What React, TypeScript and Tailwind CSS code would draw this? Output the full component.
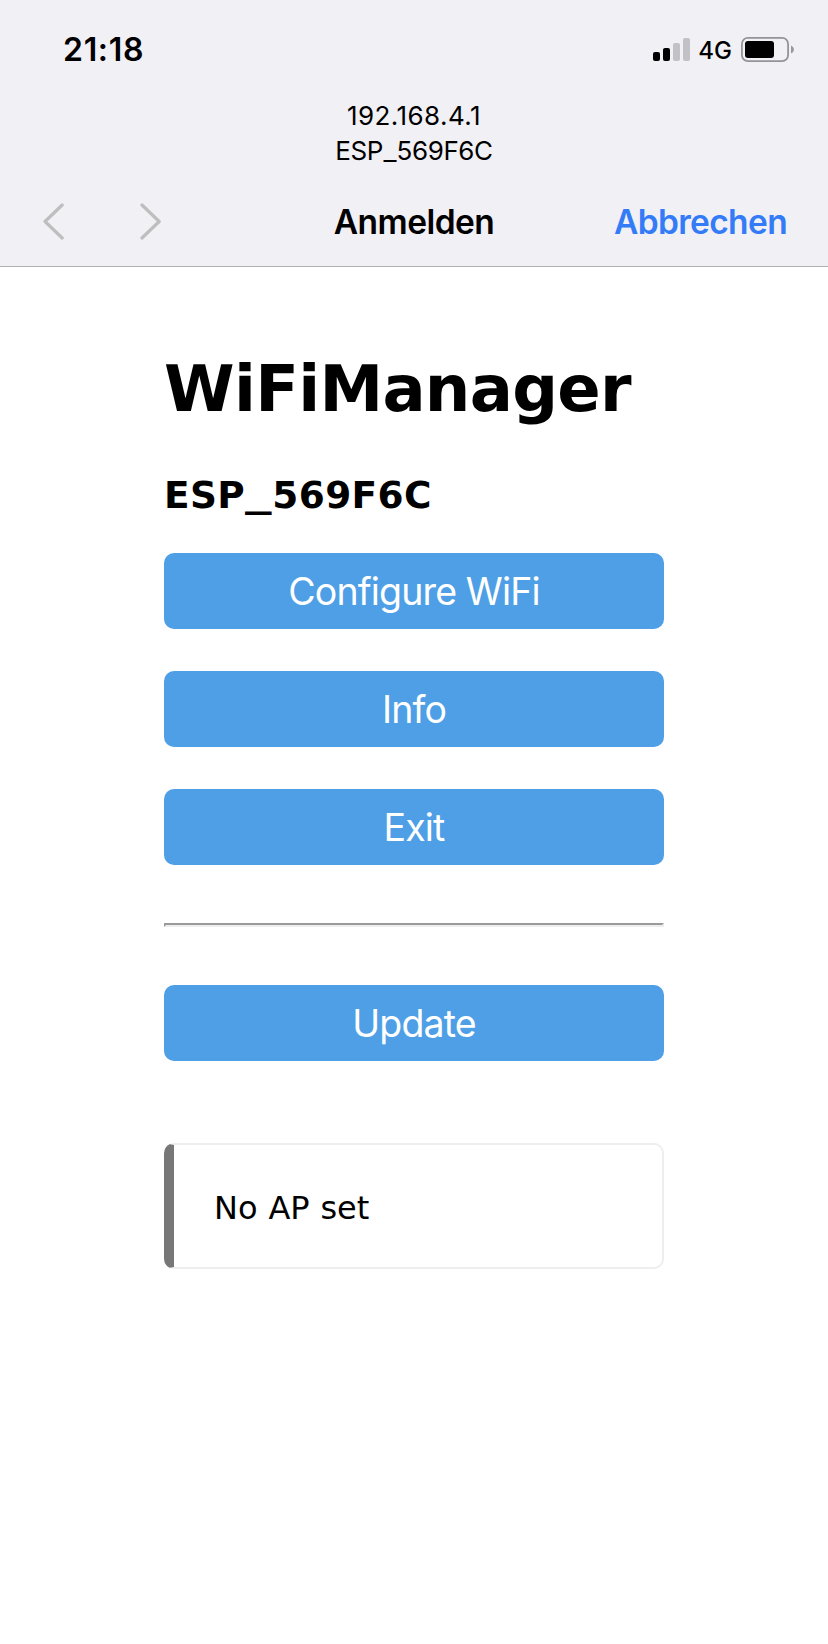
const ACTIONS = ["Configure WiFi", "Info", "Exit"];

function Signal() {
  return (
    <svg width="37" height="24" viewBox="0 0 37 24" aria-hidden="true">
      <rect x="0" y="14" width="7" height="9" rx="2" fill="#000" />
      <rect x="10" y="10" width="7" height="13" rx="2" fill="#000" />
      <rect x="20" y="5" width="7" height="18" rx="2" fill="#c1c1c6" />
      <rect x="30" y="0" width="7" height="23" rx="2" fill="#c1c1c6" />
    </svg>
  );
}

function Battery() {
  return (
    <svg width="53" height="25" viewBox="0 0 53 25" aria-hidden="true">
      <rect x="0.9" y="0.9" width="46.2" height="23.2" rx="6" fill="none" stroke="#949498" strokeWidth="1.8" />
      <rect x="4" y="4" width="29" height="17" rx="3" fill="#000" />
      <path d="M50 8.5 Q53 9.8 53 12.5 Q53 15.2 50 16.5 Z" fill="#98989c" />
    </svg>
  );
}

function Chevron({ d }: { d: string }) {
  return (
    <svg width="21" height="37" viewBox="0 0 21 37" fill="none" stroke="#bebebf" strokeWidth="3.2" strokeLinecap="round" strokeLinejoin="round" aria-hidden="true">
      <path d={d} />
    </svg>
  );
}

function ActionButton({ label }: { label: string }) {
  return (
    <button className="block h-[76px] w-full rounded-[10px] bg-[#4e9fe6] text-center font-['Inter',sans-serif] text-[37.5px] leading-[78px] tracking-[-0.85px] text-white">
      {label}
    </button>
  );
}

export default function App() {
  return (
    <div className="flex min-h-[1644px] w-[828px] flex-col bg-white font-['DejaVu_Sans',sans-serif] text-black">
      <header className="h-[267px] border-b border-[#b0b0b5] bg-[#f1f0f5] font-['Inter',sans-serif]">
        <div className="flex h-[98px] items-center justify-between pt-px pr-[34px] pl-[63px]">
          <span className="pt-px text-[32px] font-semibold tracking-[0.7px]">21:18</span>
          <div className="flex items-center">
            <Signal />
            <span className="mr-[9px] ml-2 pt-0.5 text-[24px] leading-6 font-medium">4G</span>
            <Battery />
          </div>
        </div>
        <div className="text-center text-[26px] leading-[35px]">
          <div className="tracking-[0.45px]">192.168.4.1</div>
          <div className="flex justify-center tracking-[-0.4px]">
            ESP<span className="mx-[1px] inline-block scale-x-110">_</span>569F6C
          </div>
        </div>
        <nav className="grid h-[98px] grid-cols-3 items-center pt-[9px] pr-[41px] pl-[43px] text-[33.5px]">
          <div className="flex gap-[76px]">
            <Chevron d="M19.2 2 L2 18.5 L19.2 35" />
            <Chevron d="M2 2 L19.2 18.5 L2 35" />
          </div>
          <span className="-ml-0.5 pt-0.5 text-center font-semibold tracking-[-0.55px]">Anmelden</span>
          <span className="pt-0.5 text-right font-semibold tracking-[-0.65px] text-[#347bf7]">Abbrechen</span>
        </nav>
      </header>
      <main className="mx-auto flex w-[500px] flex-col pt-[90px]">
        <h1 className="text-[64px] leading-[64px] font-bold tracking-[-0.7px] whitespace-nowrap">WiFiManager</h1>
        <h3 className="mt-[54px] flex text-[37.44px] leading-[40px] font-bold tracking-[0.4px]">
          ESP<span className="mx-1 inline-block -translate-y-0.5 scale-x-[1.42]">_</span>569F6C
        </h3>
        <div className="mt-[38px] flex flex-col gap-[42px]">
          {ACTIONS.map((label) => (
            <ActionButton key={label} label={label} />
          ))}
        </div>
        <hr className="my-[58px] h-1 border-2 border-t-[#9a9a9a] border-r-[#eeeeee] border-b-[#eeeeee] border-l-[#9a9a9a]" />
        <ActionButton label="Update" />
        <div className="mt-[82px] h-[126px] rounded-[10px] border-2 border-l-[10px] border-[#eeeeee] border-l-[#777777] pl-10 text-[32px] leading-[126px] [word-spacing:0.7px]">
          No AP set
        </div>
      </main>
    </div>
  );
}
